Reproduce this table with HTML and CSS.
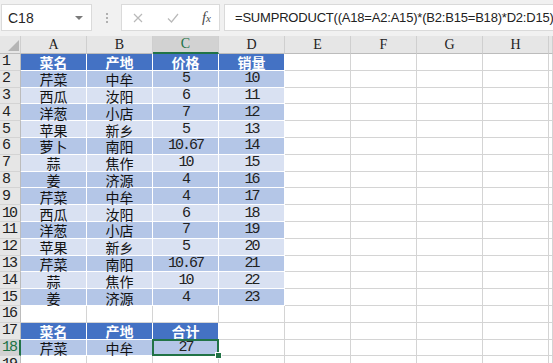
FILE: index.html
```html
<!DOCTYPE html>
<html lang="zh-CN">
<head>
    <meta charset="UTF-8">
    <meta name="viewport" content="width=device-width, initial-scale=1.0">
    <title>销量汇总</title>
    <link rel="stylesheet" href="styles.css">
</head>
<body>
    <!-- Name box + formula input -->
    <div class="formula-bar">
        <div class="name-box">
            <span>C18</span>
            <span class="caret"></span>
        </div>
        <div class="grip"><i></i><i></i><i></i></div>
        <div class="fx-buttons">
            <svg width="12" height="12" viewBox="0 0 12 12"><path d="M2 2 L10 10 M10 2 L2 10" stroke="#b9b9b9" stroke-width="1.2" fill="none"/></svg>
            <svg width="14" height="12" viewBox="0 0 14 12"><path d="M2 6.5 L5.5 10 L12 2" stroke="#b9b9b9" stroke-width="1.2" fill="none"/></svg>
            <span class="fx">f<small>x</small></span>
        </div>
        <div class="formula">=SUMPRODUCT((A18=A2:A15)*(B2:B15=B18)*D2:D15)</div>
    </div>

    <table class="sheet">
        <colgroup>
            <col class="rh">
            <col class="c"><col class="c"><col class="c"><col class="c">
            <col class="c"><col class="c"><col class="c"><col class="c">
            <col>
        </colgroup>
        <thead>
            <tr>
                <th class="corner"><svg width="21" height="17" viewBox="0 0 21 17"><polygon points="8,15 19,15 19,4" fill="#b5b5b5"/></svg></th>
                <th>A</th><th>B</th><th class="sel">C</th><th>D</th>
                <th>E</th><th>F</th><th>G</th><th>H</th><th></th>
            </tr>
        </thead>
        <tbody>
            <tr><th>1</th><td class="h">菜名</td><td class="h">产地</td><td class="h">价格</td><td class="h">销量</td><td></td><td></td><td></td><td></td><td></td></tr>
            <tr><th>2</th><td class="d">芹菜</td><td class="d">中牟</td><td class="d n">5</td><td class="d n">10</td><td></td><td></td><td></td><td></td><td></td></tr>
            <tr><th>3</th><td class="l">西瓜</td><td class="l">汝阳</td><td class="l n">6</td><td class="l n">11</td><td></td><td></td><td></td><td></td><td></td></tr>
            <tr><th>4</th><td class="d">洋葱</td><td class="d">小店</td><td class="d n">7</td><td class="d n">12</td><td></td><td></td><td></td><td></td><td></td></tr>
            <tr><th>5</th><td class="l">苹果</td><td class="l">新乡</td><td class="l n">5</td><td class="l n">13</td><td></td><td></td><td></td><td></td><td></td></tr>
            <tr><th>6</th><td class="d">萝卜</td><td class="d">南阳</td><td class="d n">10.67</td><td class="d n">14</td><td></td><td></td><td></td><td></td><td></td></tr>
            <tr><th>7</th><td class="l">蒜</td><td class="l">焦作</td><td class="l n">10</td><td class="l n">15</td><td></td><td></td><td></td><td></td><td></td></tr>
            <tr><th>8</th><td class="d">姜</td><td class="d">济源</td><td class="d n">4</td><td class="d n">16</td><td></td><td></td><td></td><td></td><td></td></tr>
            <tr><th>9</th><td class="d">芹菜</td><td class="d">中牟</td><td class="d n">4</td><td class="d n">17</td><td></td><td></td><td></td><td></td><td></td></tr>
            <tr><th>10</th><td class="l">西瓜</td><td class="l">汝阳</td><td class="l n">6</td><td class="l n">18</td><td></td><td></td><td></td><td></td><td></td></tr>
            <tr><th>11</th><td class="d">洋葱</td><td class="d">小店</td><td class="d n">7</td><td class="d n">19</td><td></td><td></td><td></td><td></td><td></td></tr>
            <tr><th>12</th><td class="l">苹果</td><td class="l">新乡</td><td class="l n">5</td><td class="l n">20</td><td></td><td></td><td></td><td></td><td></td></tr>
            <tr><th>13</th><td class="d">芹菜</td><td class="d">南阳</td><td class="d n">10.67</td><td class="d n">21</td><td></td><td></td><td></td><td></td><td></td></tr>
            <tr><th>14</th><td class="l">蒜</td><td class="l">焦作</td><td class="l n">10</td><td class="l n">22</td><td></td><td></td><td></td><td></td><td></td></tr>
            <tr><th>15</th><td class="d">姜</td><td class="d">济源</td><td class="d n">4</td><td class="d n">23</td><td></td><td></td><td></td><td></td><td></td></tr>
            <tr><th>16</th><td></td><td></td><td></td><td></td><td></td><td></td><td></td><td></td><td></td></tr>
            <tr><th>17</th><td class="h">菜名</td><td class="h">产地</td><td class="h">合计</td><td></td><td></td><td></td><td></td><td></td><td></td></tr>
            <tr><th class="sel">18</th><td class="d">芹菜</td><td class="d">中牟</td><td class="d n active">27</td><td></td><td></td><td></td><td></td><td></td><td></td></tr>
            <tr><th>19</th><td></td><td></td><td></td><td></td><td></td><td></td><td></td><td></td><td></td></tr>
        </tbody>
    </table>
</body>
</html>
```

FILE: styles.css
```css
/* General styling */
body {
    margin: 0;
    width: 553px;
    height: 363px;
    overflow: hidden;
    background-color: #fff;
    font-family: "Noto Sans CJK SC", sans-serif;
}

/* Formula bar */
.formula-bar {
    height: 36px;
    box-sizing: border-box;
    padding-top: 4px;
    display: flex;
    align-items: flex-start;
    background-color: #f1f1f1;
}

.name-box {
    margin-left: 1px;
    width: 91px;
    height: 27px;
    box-sizing: border-box;
    padding: 0 8px 0 6px;
    display: flex;
    align-items: center;
    justify-content: space-between;
    background-color: #fff;
    border: 1px solid #dadada;
    font: 14px "Liberation Sans", sans-serif;
    color: #262626;
}

.caret {
    border-left: 4px solid transparent;
    border-right: 4px solid transparent;
    border-top: 4px solid #7a7a7a;
}

.grip {
    width: 29px;
    height: 27px;
    display: flex;
    flex-direction: column;
    align-items: center;
    justify-content: center;
    gap: 2px;
}

.grip i {
    width: 2px;
    height: 2px;
    background-color: #b0b0b0;
}

.fx-buttons {
    width: 99px;
    height: 27px;
    box-sizing: border-box;
    padding: 0 8px 0 10px;
    display: flex;
    align-items: center;
    justify-content: space-between;
    background-color: #fff;
    border: 1px solid #dadada;
}

.fx {
    font: italic 15px "Liberation Serif", serif;
    color: #4a4a4a;
}

.fx small {
    font-size: 11px;
}

.formula {
    margin-left: 4px;
    flex: 1;
    height: 27px;
    box-sizing: border-box;
    padding-left: 10px;
    background-color: #fff;
    border: 1px solid #dadada;
    border-right: none;
    font: 13px/25px "Liberation Sans", sans-serif;
    letter-spacing: -0.2px;
    color: #222;
    white-space: nowrap;
    overflow: hidden;
}

/* Sheet grid */
.sheet {
    width: 553px;
    table-layout: fixed;
    border-collapse: separate;
    border-spacing: 0;
}

col.rh {
    width: 21px;
}

col.c {
    width: 66px;
}

.sheet thead th {
    height: 17px;
    padding: 0;
    background-color: #e6e6e6;
    border-right: 1px solid #cfcfcf;
    border-bottom: 1px solid #bcbcbc;
    font: 14px/16px "Liberation Serif", serif;
    color: #222;
    box-sizing: border-box;
}

.sheet thead th.corner {
    line-height: 0;
}

.sheet thead th.sel {
    background-color: #d2d2d2;
    color: #217346;
    border-bottom: 2px solid #217346;
}

.sheet tbody tr {
    height: 16.8px;
}

.sheet tbody th {
    padding: 1px 0 0 2px;
    text-align: left;
    vertical-align: middle;
    background-color: #e6e6e6;
    border-right: 1px solid #bcbcbc;
    border-bottom: 1px solid #d4d4d4;
    font: normal 15px/14px "Liberation Mono", monospace;
    letter-spacing: -2px;
    color: #222;
}

.sheet tbody th.sel {
    background-color: #d2d2d2;
    color: #217346;
    border-right: 2px solid #217346;
}

.sheet td {
    padding: 1px 0 0;
    text-align: center;
    vertical-align: middle;
    border-right: 1px solid #d4d4d4;
    border-bottom: 1px solid #d4d4d4;
    font-size: 14px;
    line-height: 14px;
    color: #111;
    white-space: nowrap;
}

/* Table styles */
.sheet td.h {
    background-color: #4472c4;
    color: #fff;
    font-weight: bold;
    border-color: #fff;
}

.sheet td.d {
    background-color: #b4c6e7;
    border-color: #fff;
}

.sheet td.l {
    background-color: #d9e1f2;
    border-color: #fff;
}

.sheet td.n {
    font-family: "Liberation Mono", monospace;
    font-size: 15px;
    letter-spacing: -2px;
    color: #222;
}

/* Active cell with fill handle */
.sheet td.active {
    position: relative;
}

.sheet td.active::after {
    content: "";
    position: absolute;
    left: -1px;
    top: -1px;
    right: -1px;
    bottom: -1px;
    border: 2px solid #217346;
}

.sheet td.active::before {
    content: "";
    position: absolute;
    right: -4px;
    bottom: -4px;
    width: 5px;
    height: 5px;
    background-color: #217346;
    border: 1px solid #fff;
    z-index: 1;
}
```
